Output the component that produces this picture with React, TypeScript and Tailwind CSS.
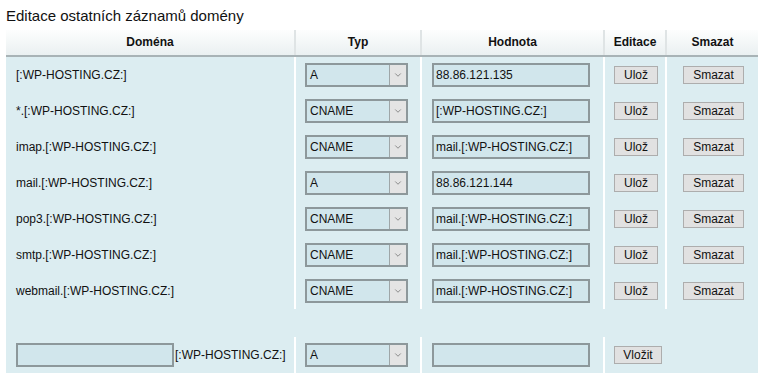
import { ChevronDown } from 'lucide-react'

const rows = [
  { domain: '[:WP-HOSTING.CZ:]', type: 'A', value: '88.86.121.135' },
  { domain: '*.[:WP-HOSTING.CZ:]', type: 'CNAME', value: '[:WP-HOSTING.CZ:]' },
  { domain: 'imap.[:WP-HOSTING.CZ:]', type: 'CNAME', value: 'mail.[:WP-HOSTING.CZ:]' },
  { domain: 'mail.[:WP-HOSTING.CZ:]', type: 'A', value: '88.86.121.144' },
  { domain: 'pop3.[:WP-HOSTING.CZ:]', type: 'CNAME', value: 'mail.[:WP-HOSTING.CZ:]' },
  { domain: 'smtp.[:WP-HOSTING.CZ:]', type: 'CNAME', value: 'mail.[:WP-HOSTING.CZ:]' },
  { domain: 'webmail.[:WP-HOSTING.CZ:]', type: 'CNAME', value: 'mail.[:WP-HOSTING.CZ:]' },
]

const grid = 'grid grid-cols-[288px_126px_183px_62px_93px]'

function Select({ value }: { value: string }) {
  return (
    <div className="flex h-[24px] w-[103px] border-2 border-[#8d989b] bg-[#d1e6ec]">
      <div className="flex-1 pl-[3px] text-[12px] leading-[20px] text-[#111]">{value}</div>
      <div className="flex w-[17px] items-center justify-center border-l border-[#9ea6a8] bg-[#e4e4e4]">
        <ChevronDown className="h-[10px] w-[10px] text-[#555]" strokeWidth={1.5} />
      </div>
    </div>
  )
}

function Input({ value, w }: { value: string; w: string }) {
  return (
    <div className={`h-[24px] ${w} border-2 border-[#8d989b] bg-[#d1e6ec] pl-[2px] text-[12px] leading-[20px] text-[#111]`}>
      {value}
    </div>
  )
}

function Btn({ label, w }: { label: string; w: string }) {
  return (
    <div className={`h-[18px] ${w} border border-[#adadad] bg-[#e1e1e1] text-center text-[12px] leading-[16px] text-[#111]`}>
      {label}
    </div>
  )
}

export default function App() {
  return (
    <div className="h-[378px] w-[764px] bg-white font-['Liberation_Sans',Arial,sans-serif]">
      <div className="h-[30px] pl-[6px] pt-[7px] text-[15px] leading-[18px] text-[#111]">
        Editace ostatních záznamů domény
      </div>

      <div className="ml-[6px] w-[752px] bg-[#dcedf1]">
        {/* header */}
        <div className={`${grid} h-[27px] border-b-2 border-[#a8b3b6] bg-gradient-to-b from-[#fdfefe] to-[#eaf0f1] text-center text-[12px] font-bold leading-[24px] text-[#111]`}>
          <div>Doména</div>
          <div className="border-l-2 border-[#dfe4e5]">Typ</div>
          <div className="border-l-2 border-[#dfe4e5]">Hodnota</div>
          <div className="border-l-2 border-[#dfe4e5]">Editace</div>
          <div className="border-l-2 border-[#dfe4e5]">Smazat</div>
        </div>

        {rows.map((r) => (
          <div key={r.domain} className={`${grid} h-[36px] text-[12px] text-[#111]`}>
            <div className="flex items-center pl-[10px]">{r.domain}</div>
            <div className="flex items-center border-l-2 border-white pl-[9px]">
              <Select value={r.type} />
            </div>
            <div className="flex items-center border-l-2 border-white pl-[10px]">
              <Input value={r.value} w="w-[158px]" />
            </div>
            <div className="flex items-center border-l-2 border-white pl-[9px]">
              <Btn label="Ulož" w="w-[44px]" />
            </div>
            <div className="flex items-center border-l-2 border-white pl-[16px]">
              <Btn label="Smazat" w="w-[61px]" />
            </div>
          </div>
        ))}

        <div className="h-[28px]" />

        {/* new record */}
        <div className={`${grid} h-[36px] text-[12px] text-[#111]`}>
          <div className="flex items-center pl-[10px]">
            <Input value="" w="w-[158px]" />
            <span className="ml-[1px]">[:WP-HOSTING.CZ:]</span>
          </div>
          <div className="flex items-center border-l-2 border-white pl-[9px]">
            <Select value="A" />
          </div>
          <div className="flex items-center border-l-2 border-white pl-[10px]">
            <Input value="" w="w-[158px]" />
          </div>
          <div className="col-span-2 flex items-center border-l-2 border-white pl-[9px]">
            <Btn label="Vložit" w="w-[48px]" />
          </div>
        </div>
      </div>
    </div>
  )
}
